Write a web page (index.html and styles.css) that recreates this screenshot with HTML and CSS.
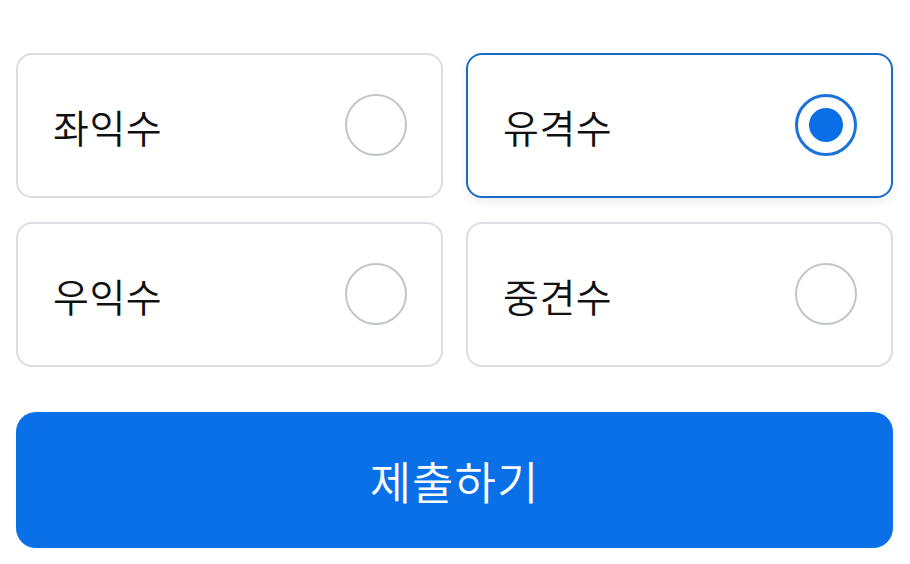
FILE: index.html
```html
<!DOCTYPE html>
<html lang="ko">
<head>
<meta charset="utf-8">
<link rel="stylesheet" href="styles.css">
</head>
<body>
<div class="page">
  <div class="grid">
    <label class="card"><span class="label">좌익수</span><span class="radio"></span></label>
    <label class="card selected"><span class="label">유격수</span><span class="radio on"></span></label>
    <label class="card"><span class="label">우익수</span><span class="radio"></span></label>
    <label class="card"><span class="label">중견수</span><span class="radio"></span></label>
  </div>
  <button class="submit">제출하기</button>
</div>
</body>
</html>
```
FILE: styles.css
```css
html, body { margin: 0; padding: 0; background: #fff; }
body { font-family: "Noto Sans CJK KR", "Noto Sans", sans-serif; }
.page { padding: 53px 17px 0 16px; display: flex; flex-direction: column; gap: 45px; }
.grid { display: grid; grid-template-columns: 1fr 1fr; column-gap: 23px; row-gap: 24px; }
.card {
  box-sizing: border-box; height: 145px; border: 2px solid #dcdde0; border-radius: 16px;
  display: flex; align-items: center; justify-content: space-between;
  padding: 2px 34px 0 35px; background: #fff;
}
.card.selected { border-color: #1a6bc2; box-shadow: 0 4px 10px rgba(0,0,0,0.08); }
.label { font-size: 39px; color: #111; letter-spacing: 0.5px; line-height: 1; font-weight: 350; }
.radio {
  box-sizing: border-box; width: 62px; height: 62px; border-radius: 50%;
  border: 2px solid #c3c6c9; display: flex; align-items: center; justify-content: center;
  margin-top: -3px;
}
.radio.on { border: 3px solid #1a73d9; }
.radio.on::after { content: ""; width: 34px; height: 34px; border-radius: 50%; background: #0a6fe6; }
.submit {
  height: 136px; border: none; border-radius: 20px; background: #0a70e8; color: #fff;
  font-family: "Noto Sans CJK KR", "Noto Sans", sans-serif; font-size: 45px; padding: 0;
  letter-spacing: 1px; font-weight: 350;
}
```
